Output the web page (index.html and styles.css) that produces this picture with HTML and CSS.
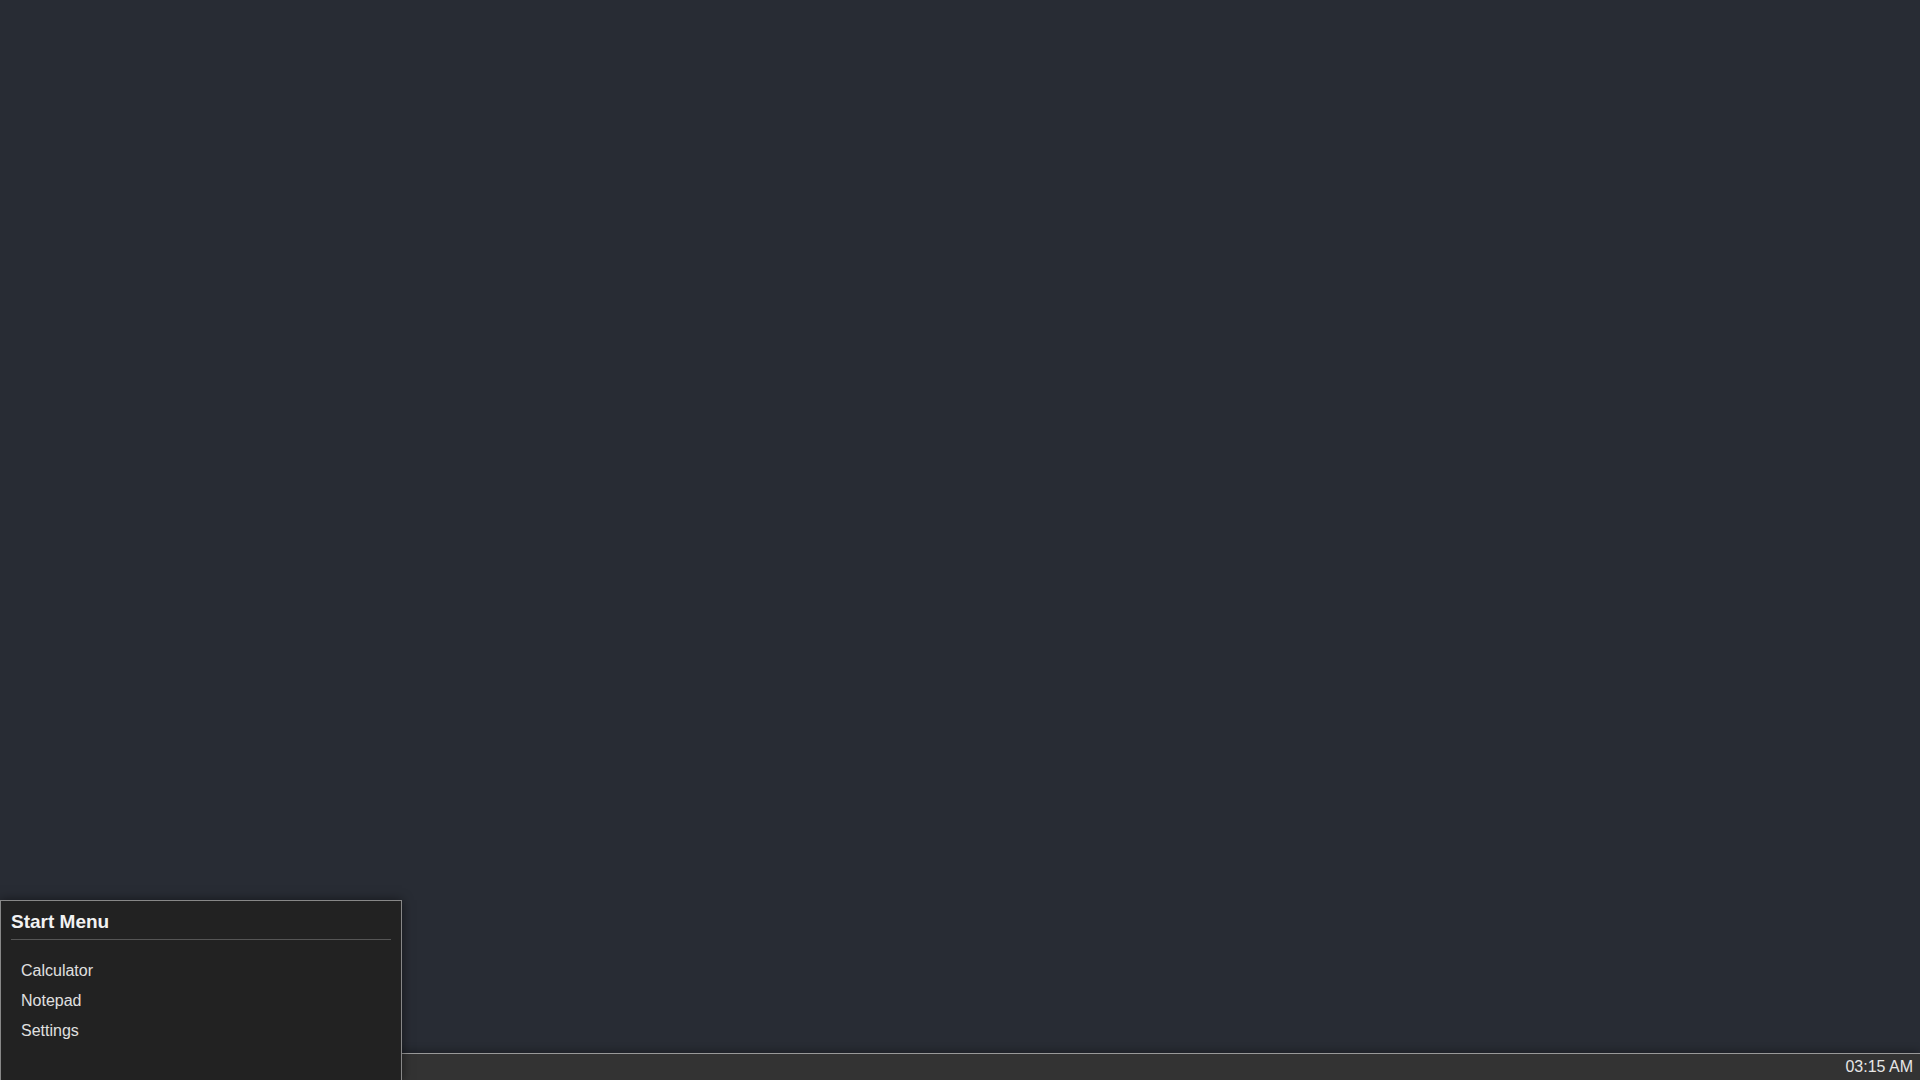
FILE: index.html
```html
<!DOCTYPE html>
<html lang="en">
<head>
<meta charset="utf-8">
<title>Desktop</title>
<link rel="stylesheet" href="styles.css">
</head>
<body>
<div class="desktop">
  <div class="taskbar">
    <div class="clock">03:15 AM</div>
  </div>
  <div class="start-menu">
    <h3 class="menu-title">Start Menu</h3>
    <ul class="menu-list">
      <li class="menu-item">Calculator</li>
      <li class="menu-item">Notepad</li>
      <li class="menu-item">Settings</li>
    </ul>
  </div>
</div>
</body>
</html>
```
FILE: styles.css
```css
html, body {
  margin: 0;
  padding: 0;
  height: 100%;
}
body {
  font-family: "Liberation Sans", Arial, sans-serif;
  background: #282c34;
  color: #e0e0e0;
  overflow: hidden;
}
.desktop {
  position: relative;
  width: 100vw;
  height: 100vh;
  background: #282c34;
}
.taskbar {
  position: absolute;
  left: 0;
  right: 0;
  bottom: 0;
  height: 26px;
  background: #333333;
  border-top: 1px solid #999999;
  box-shadow: 0 -2px 8px rgba(0, 0, 0, 0.3);
  display: flex;
  align-items: center;
  justify-content: flex-end;
  padding: 0 7px;
}
.clock {
  font-size: 16px;
  line-height: 18px;
  color: #e6e6e6;
}
.start-menu {
  position: absolute;
  left: 0;
  bottom: -1px;
  width: 402px;
  height: 181px;
  box-sizing: border-box;
  background: #222222;
  border: 1px solid #888888;
  padding: 10px;
  box-shadow: 0 0 10px rgba(0, 0, 0, 0.5);
  z-index: 2;
}
.menu-title {
  margin: 0 0 16px 0;
  font-size: 19px;
  font-weight: bold;
  line-height: 22px;
  color: #f2f2f2;
  padding-bottom: 6px;
  border-bottom: 1px solid #555555;
}
.menu-list {
  list-style: none;
  margin: 0;
  padding: 0;
}
.menu-item {
  font-size: 16px;
  line-height: 18px;
  padding: 6px 10px;
  color: #e0e0e0;
}
```
